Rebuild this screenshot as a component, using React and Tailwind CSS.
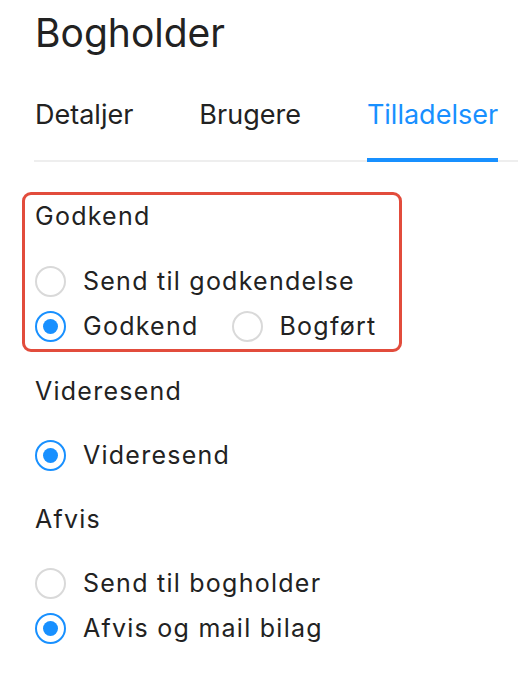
import React from 'react';

const Radio = ({ checked, label }) => (
  <label className="flex items-center gap-[17px] h-[45px]">
    <span
      className={`w-[31px] h-[31px] rounded-full border-2 flex items-center justify-center shrink-0 ${
        checked ? 'border-[#1890ff]' : 'border-[#d9d9d9]'
      }`}
    >
      {checked && <span className="w-[15px] h-[15px] rounded-full bg-[#1890ff]" />}
    </span>
    <span className="text-[25px] tracking-[0.05em] text-[#222222]">{label}</span>
  </label>
);

const Heading = ({ children }) => (
  <div className="text-[25px] leading-[34px] tracking-[0.05em] text-[#222222]">{children}</div>
);

export default function App() {
  const tabs = ['Detaljer', 'Brugere', 'Tilladelser'];
  const active = 'Tilladelser';

  return (
    <div className="min-h-screen bg-white pl-[35px] pt-[8px]" style={{ fontFamily: 'Inter, "Noto Sans", sans-serif' }}>
      <h1 className="text-[39px] leading-[50px] text-[#222222]">Bogholder</h1>

      <div className="mt-[40px] flex gap-[66px] border-b-2 border-[#eeeeee] -ml-[1px] pl-[1px]">
        {tabs.map((t) => (
          <div
            key={t}
            className={`text-[27px] leading-[34px] pb-[26px] -mb-[2px] border-b-4 ${
              t === active ? 'text-[#1890ff] border-[#1890ff]' : 'text-[#222222] border-transparent'
            }`}
          >
            {t}
          </div>
        ))}
      </div>

      <div className="mt-[30px] -ml-[13px] w-[380px] border-[3px] border-[#e24c3c] rounded-[9px] pl-[10px] pt-[4px]">
        <Heading>Godkend</Heading>
        <div className="mt-[26px]">
          <Radio label="Send til godkendelse" />
          <div className="flex gap-[33px]">
            <Radio checked label="Godkend" />
            <Radio label="Bogført" />
          </div>
        </div>
      </div>

      <div className="mt-[22px]">
        <Heading>Videresend</Heading>
        <div className="mt-[25px]">
          <Radio checked label="Videresend" />
        </div>
      </div>

      <div className="mt-[24px]">
        <Heading>Afvis</Heading>
        <div className="mt-[25px]">
          <Radio label="Send til bogholder" />
          <Radio checked label="Afvis og mail bilag" />
        </div>
      </div>
    </div>
  );
}
